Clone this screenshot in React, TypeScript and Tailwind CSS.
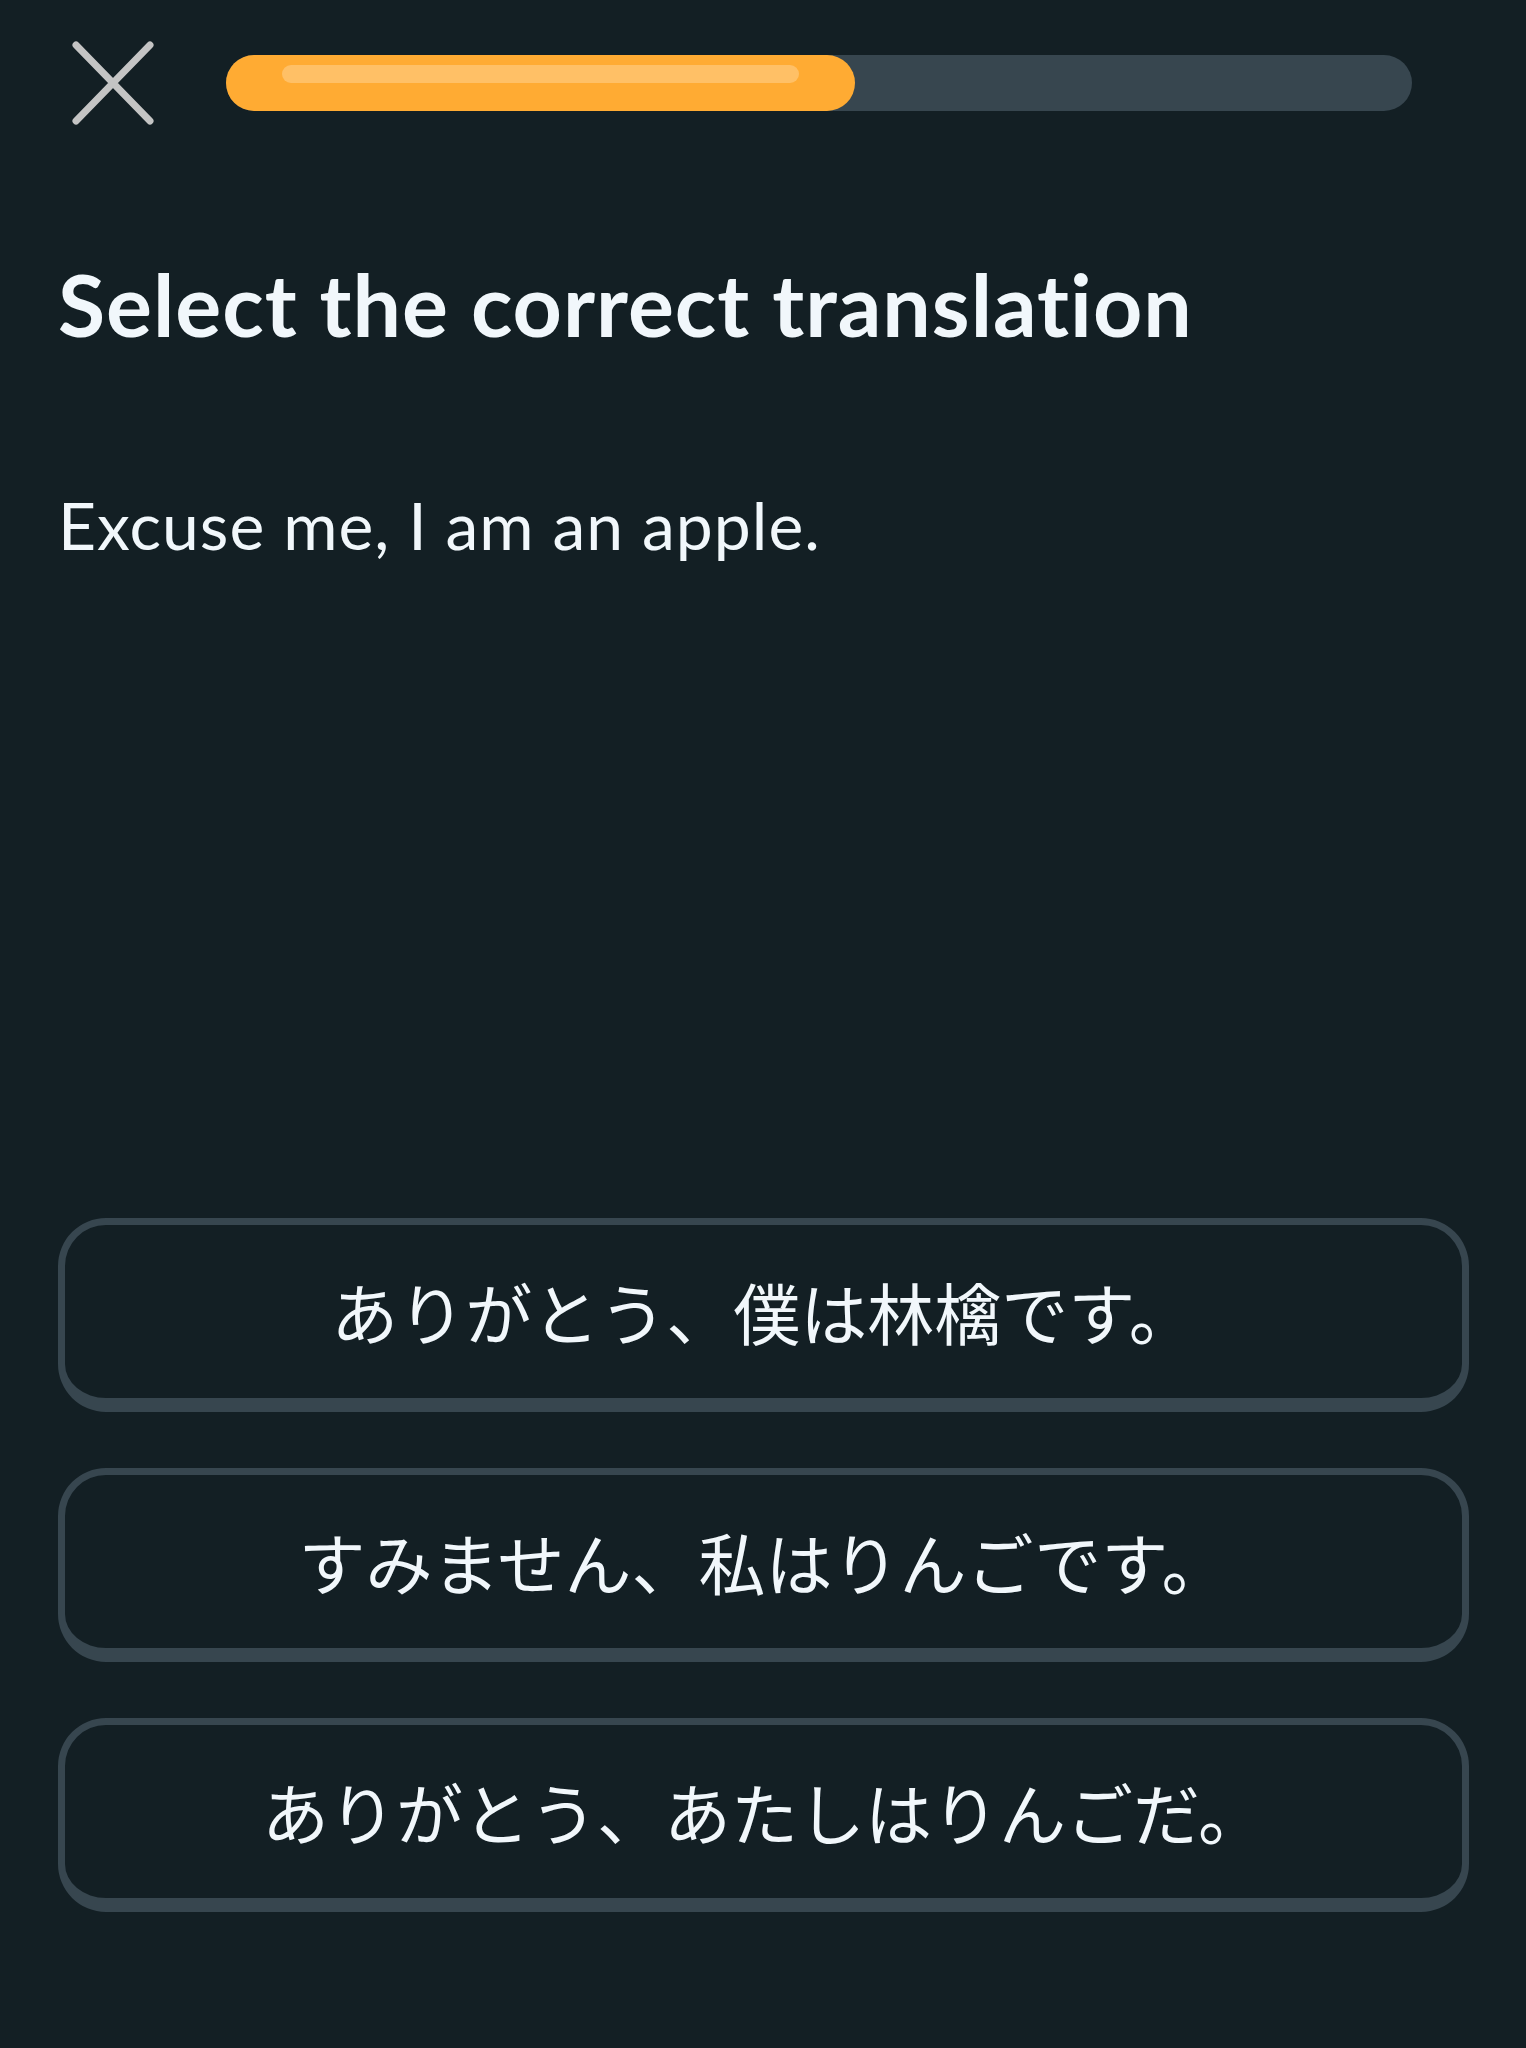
import { useState } from "react";

const options = [
  "ありがとう、僕は林檎です。",
  "すみません、私はりんごです。",
  "ありがとう、あたしはりんごだ。",
];

export default function App() {
  const [selected, setSelected] = useState<number | null>(null);
  const progress = 53;

  return (
    <div className="flex h-screen flex-col bg-[#131f24] pl-[58px] pr-[57px] font-['Lato','Noto_Sans_CJK_JP',sans-serif] text-[#f1f7fb]">
      {/* header */}
      <div className="mt-[41px] flex h-[84px] items-center pl-[12px] pr-[57px]">
        <button className="h-[86px] w-[86px] shrink-0 text-[#c4c4c4]">
          <svg viewBox="0 0 86 86" className="h-full w-full">
            <path
              d="M6 5 L80 81 M80 5 L6 81"
              stroke="currentColor"
              strokeWidth="7"
              strokeLinecap="round"
              fill="none"
            />
          </svg>
        </button>
        <div className="ml-[70px] h-[56px] flex-1 rounded-full bg-[#37464f]">
          <div
            className="relative h-full rounded-full bg-[#ffab33]"
            style={{ width: `${progress}%` }}
          >
            <div className="absolute left-[56px] right-[56px] top-[10px] h-[18px] rounded-full bg-[#ffc066]" />
          </div>
        </div>
      </div>

      <h1 className="mt-[136px] text-[86px] font-bold leading-none tracking-[1px] [font-variant-ligatures:none]">
        Select the correct translation
      </h1>

      <p className="mt-[145px] text-[66px] leading-none tracking-[1px] [font-variant-ligatures:none]">
        Excuse me, I am an apple.
      </p>

      <ul className="mt-auto mb-[136px] flex flex-col gap-[56px]">
        {options.map((text, i) => (
          <li key={i}>
            <button
              onClick={() => setSelected(i)}
              className={
                "flex h-[194px] w-full items-center justify-center rounded-[48px] border-[7px] border-b-[14px] font-['Noto_Sans_CJK_JP',sans-serif] text-[67px] " +
                (selected === i
                  ? "border-[#3f85a7] bg-[#202f36] text-[#1cb0f6]"
                  : "border-[#37464f] text-[#f1f7fb]")
              }
            >
              {text}
            </button>
          </li>
        ))}
      </ul>
    </div>
  );
}
